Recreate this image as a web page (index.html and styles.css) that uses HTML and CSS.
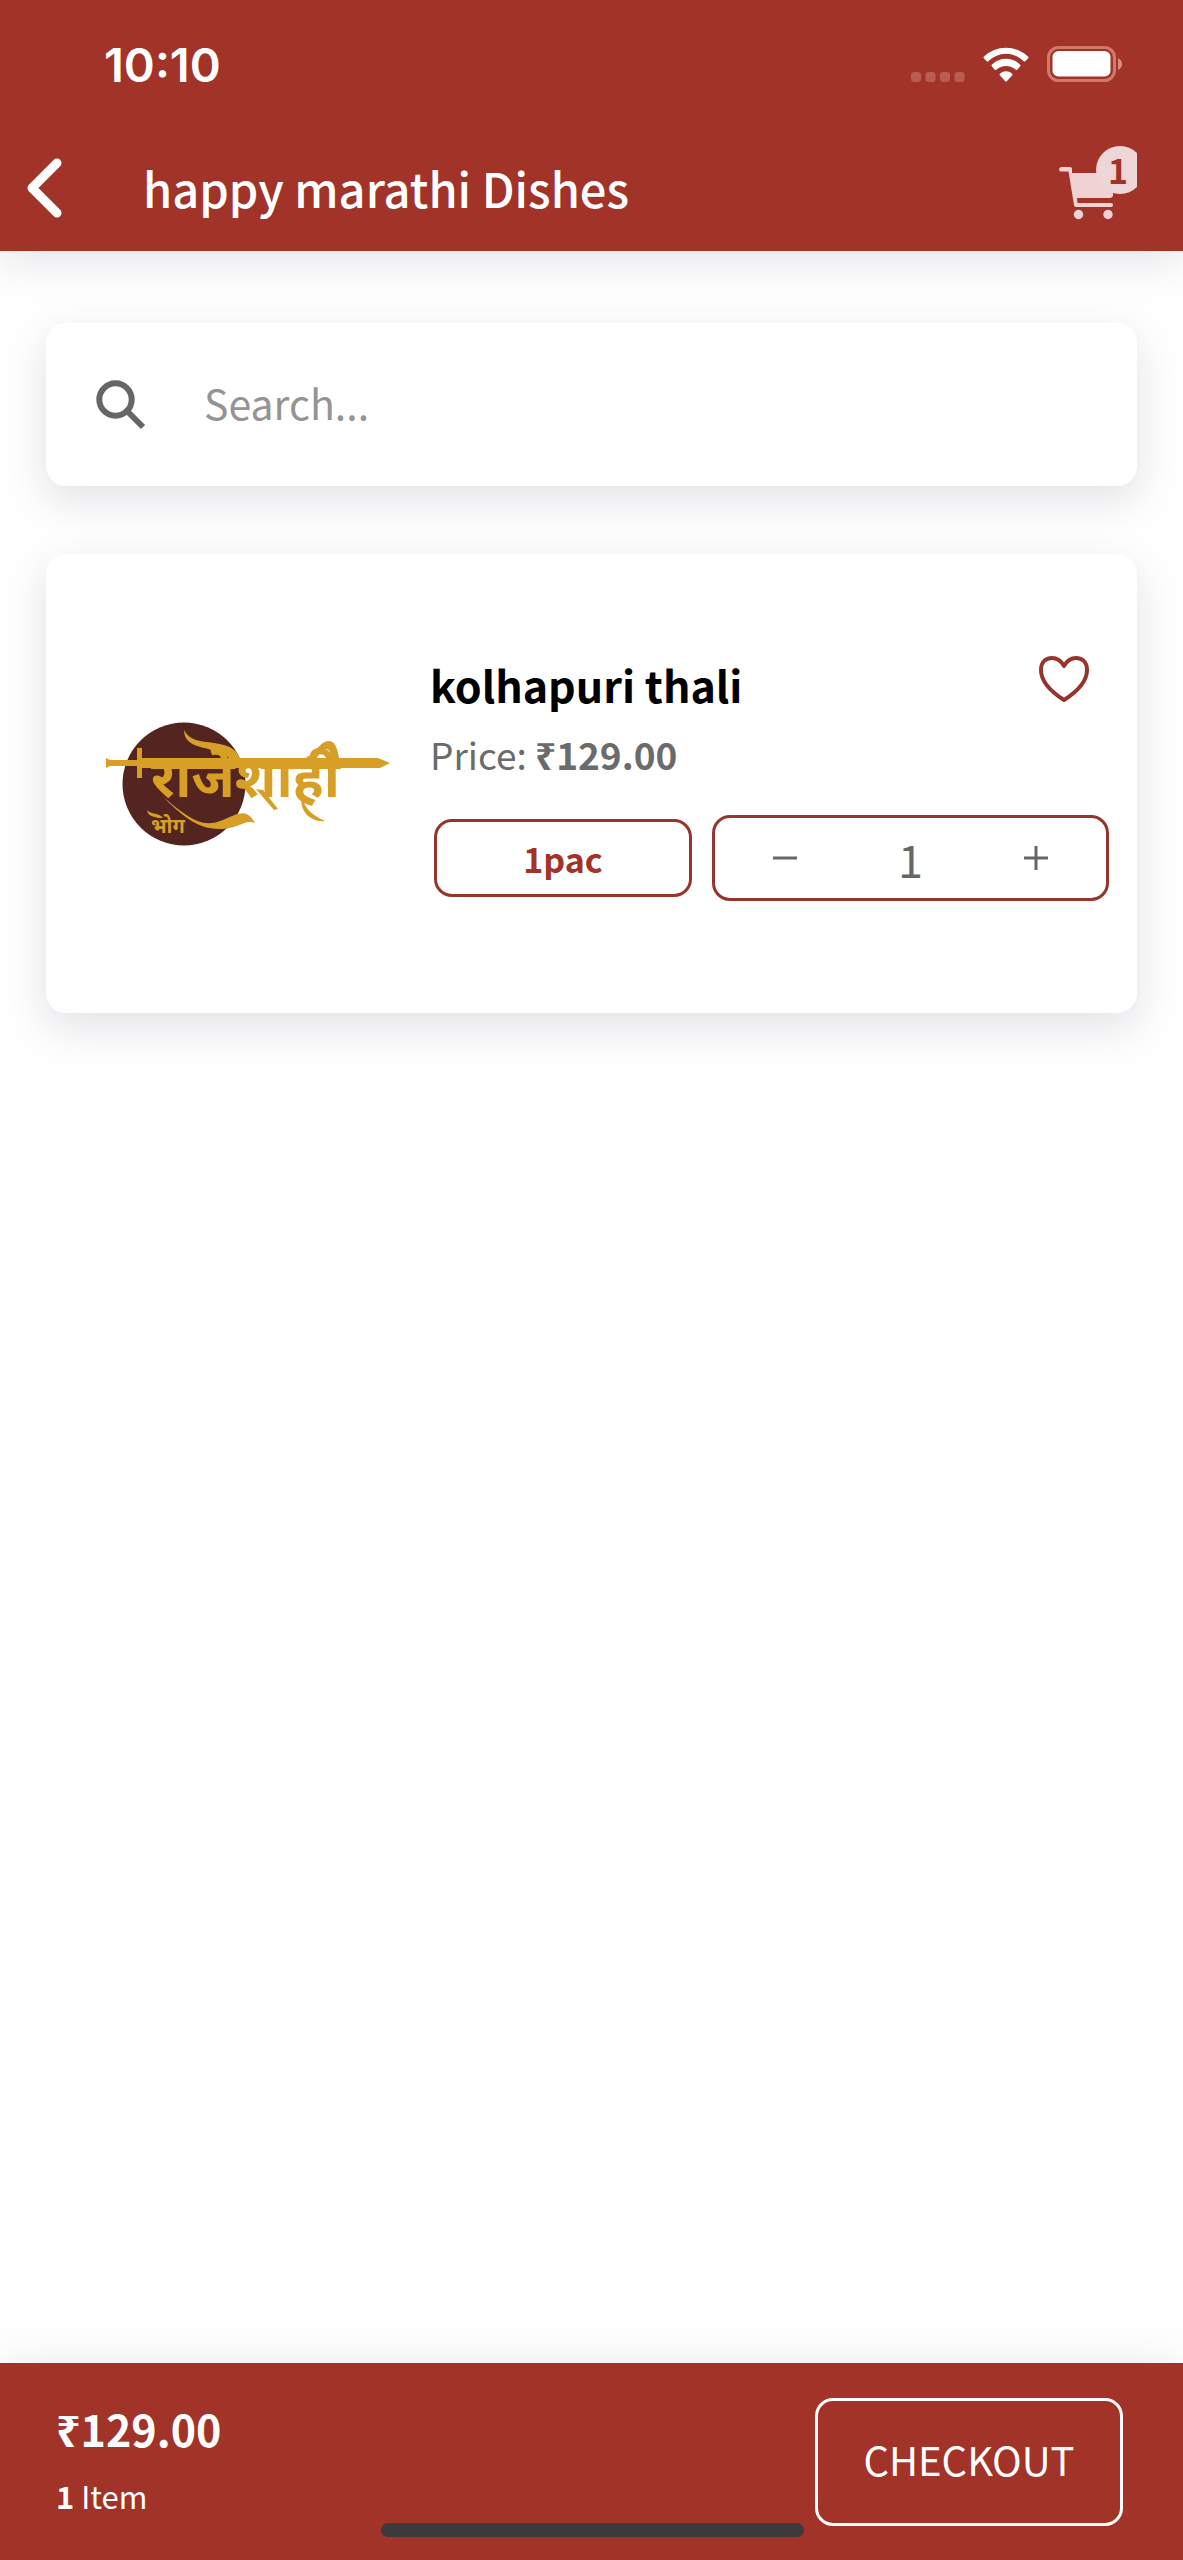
FILE: index.html
```html
<!DOCTYPE html>
<html lang="en">
<head>
    <meta charset="UTF-8">
    <meta name="viewport" content="width=device-width, initial-scale=1.0">
    <title>happy marathi Dishes</title>
    <link rel="stylesheet" href="styles.css">
</head>
<body>

    <header class="header">
        <div class="status-bar">
            <span class="time">10:10</span>
            <div class="status-icons">
                <svg class="signal" viewBox="0 0 54 10" aria-hidden="true">
                    <rect x="0" y="0" width="10" height="10" rx="3"/>
                    <rect x="14.500" y="0" width="10" height="10" rx="3"/>
                    <rect x="29" y="0" width="10" height="10" rx="3"/>
                    <rect x="43.500" y="0" width="10" height="10" rx="3"/>
                </svg>
                <svg class="wifi" viewBox="0 0 46 35" aria-hidden="true">
                    <path d="M1 9.500Q0 10.500 1 11.500L3.500 14Q4.500 15 5.500 14A25 25 0 0 1 40.500 14Q41.500 15 42.500 14L45 11.500Q46 10.500 45 9.500A32 32 0 0 0 1 9.500Z"/>
                    <path d="M9 17.500Q8 18.500 9 19.500L11.500 22.500Q12.500 23.500 13.500 22.500A14.500 14.500 0 0 1 32.500 22.500Q33.500 23.500 34.500 22.500L37 19.500Q38 18.500 37 17.500A20 20 0 0 0 9 17.500Z"/>
                    <path d="M17 26.500Q16 27.500 17 28.500L22 34Q23 35 24 34L29 28.500Q30 27.500 29 26.500A9.500 9.500 0 0 0 17 26.500Z"/>
                </svg>
                <svg class="battery" viewBox="0 0 76 36" aria-hidden="true">
                    <rect class="battery-case" x="1.500" y="1.500" width="66" height="33" rx="10"/>
                    <rect x="5.500" y="5" width="58" height="25.500" rx="6"/>
                    <path class="battery-tip" d="M71 12Q75 14 75 18T71 24Z"/>
                </svg>
            </div>
        </div>
        <div class="nav-bar">
            <button class="back" aria-label="Back">
                <svg viewBox="0 0 36 60"><path d="M30 5L5 30L30 55"/></svg>
            </button>
            <h1>happy marathi Dishes</h1>
            <button class="cart" aria-label="Cart">
                <svg viewBox="0 0 54 53">
                    <path d="M2 0H11Q13 0 13 2V6H54V29Q53 31 51 31H18L18.500 36H52Q54 36 54 38T52 40H17Q15 40 15 38L9.500 4.500H2Q0 4.500 0 2.500T2 0Z"/>
                    <circle cx="19.500" cy="47.500" r="4.700"/>
                    <circle cx="49" cy="47.500" r="4.700"/>
                </svg>
                <span class="badge">1</span>
            </button>
        </div>
    </header>

    <main>
        <label class="search">
            <svg viewBox="0 0 50 50" aria-hidden="true">
                <circle cx="19.500" cy="19.500" r="16.200"/>
                <path d="M30.500 30.500L47 47"/>
            </svg>
            <input type="text" placeholder="Search..." aria-label="Search">
        </label>

        <article class="card">
            <svg class="logo" viewBox="0 0 286 126" role="img" aria-label="Logo">
                <circle cx="78" cy="63" r="61.500" fill="#542420"/>
                <g fill="#d89f27">
                    <!-- sword -->
                    <path d="M0 37L4 39H31V27H36V37H272L284 42L274 47H36V57H31V45H4L0 47Z"/>
                    <!-- swashes around the name -->
                    <path d="M78 9C84 20 94 20 108 22C124 24 133 29 135 42H126C122 32 110 30 98 27C86 24 78 20 78 9Z"/>
                    <path d="M56 75C78 93 94 108 114 100C130 94 140 85 149 102C139 98 134 107 116 108C90 109 74 92 56 75Z"/>
                    <path d="M150 68L157 69L172 88L168 89Z"/>
                    <path d="M197 70C195 86 206 94 219 100C206 102 190 90 197 70Z"/>
                    <path d="M200 36C210 34 213 20 223 20C230 20 232 30 234 42H226C226 34 224 28 220 28C215 28 211 38 204 40Z"/>
                    <path d="M41 89C45 94 53 91 57 97H52C48 95 42 96 41 89Z"/>
                </g>
                <text class="logo-name" x="45" y="76">राजेशाही</text>
                <text class="logo-sub" x="45" y="112">भोग</text>
            </svg>
            <div class="details">
                <div class="title-row">
                    <h2>kolhapuri thali</h2>
                    <button class="favourite" aria-label="Add to favourites">
                        <svg viewBox="0 0 50 46"><path d="M25 10C21 3 17 2 13 2C6 2 2 7 2 14C2 26 14 37 25 44C36 37 48 26 48 14C48 7 44 2 37 2C33 2 29 3 25 10Z"/></svg>
                    </button>
                </div>
                <p class="price">Price: <b>₹129.00</b></p>
                <div class="options">
                    <button class="pack">1pac</button>
                    <div class="stepper">
                        <button aria-label="Decrease">
                            <svg viewBox="0 0 26 26"><path d="M1 13H25"/></svg>
                        </button>
                        <span>1</span>
                        <button aria-label="Increase">
                            <svg viewBox="0 0 26 26"><path d="M1 13H25M13 1V25"/></svg>
                        </button>
                    </div>
                </div>
            </div>
        </article>
    </main>

    <footer class="footer">
        <div class="summary">
            <b class="total">₹129.00</b>
            <span class="items"><b>1</b> Item</span>
        </div>
        <button class="checkout">CHECKOUT</button>
        <div class="home-indicator"></div>
    </footer>

</body>
</html>
```
FILE: styles.css
```css
* {
    box-sizing: border-box;
}

body {
    display: flex;
    flex-direction: column;
    min-height: 100vh;
    margin: 0;
    font-family: "Noto Sans CJK SC", "Noto Sans", sans-serif;
    background-color: #fefefe;
}

h1, h2, p {
    margin: 0;
}

button {
    padding: 0;
    border: none;
    background: none;
    font-family: inherit;
    cursor: pointer;
}

svg {
    display: block;
}

/* Header */
.header {
    background-color: #a13329;
    color: #fff;
    box-shadow: 0 8px 40px rgba(40, 20, 50, 0.12);
}

.status-bar {
    display: flex;
    justify-content: space-between;
    align-items: center;
    height: 128px;
    padding: 0 60px 0 104px;
}

.time {
    font-family: Inter, sans-serif;
    font-size: 47px;
    font-weight: 600;
}

.status-icons {
    display: flex;
    align-items: flex-end;
    gap: 18px;
    fill: #fff;
}

.signal {
    width: 54px;
    height: 10px;
    fill: #b95c51;
}

.wifi {
    width: 46px;
    height: 35px;
}

.battery {
    width: 76px;
    height: 36px;
}

.battery-case {
    fill: none;
    stroke: #cf7a6d;
    stroke-width: 3;
}

.battery-tip {
    fill: #d98d80;
}

.nav-bar {
    display: flex;
    align-items: center;
    height: 123px;
    padding: 0 46px 4px 27px;
}

.nav-bar h1 {
    flex: 1;
    margin-left: 80px;
    font-size: 47px;
    font-weight: 500;
    line-height: 60px;
}

.back svg {
    width: 36px;
    height: 60px;
    fill: none;
    stroke: #fff;
    stroke-width: 9;
    stroke-linecap: round;
    stroke-linejoin: round;
}

/* the badge circle is cut by the button's right edge */
.cart {
    position: relative;
    width: 78px;
    height: 88px;
    overflow: hidden;
}

.cart svg {
    width: 54px;
    height: 53px;
    margin-top: 12px;
    fill: #f0d2d2;
}

.badge {
    position: absolute;
    top: 0;
    left: 37px;
    width: 48px;
    height: 48px;
    margin-top: 2px;
    border-radius: 50%;
    background-color: #eed5d7;
    color: #a13329;
    font-size: 34px;
    font-weight: 700;
    line-height: 48px;
    padding-right: 4px;
}

/* Content */
main {
    display: flex;
    flex: 1;
    flex-direction: column;
    gap: 68px;
    padding: 72px 46px;
}

.search, .card {
    display: flex;
    align-items: center;
    border-radius: 20px;
    background-color: #fff;
    box-shadow: 0 14px 40px rgba(40, 20, 50, 0.12);
}

.search {
    height: 163px;
    padding: 0 50px;
}

.search svg {
    width: 50px;
    height: 50px;
    fill: none;
    stroke: #666;
    stroke-width: 6;
}

.search input {
    flex: 1;
    margin-left: 58px;
    padding: 0 0 5px;
    border: none;
    outline: none;
    background: none;
    font-family: inherit;
    font-size: 41px;
}

.search input::placeholder {
    color: #969395;
}

.card {
    gap: 38px;
    padding: 94px 28px 94px 60px;
}

.logo {
    flex: none;
    width: 286px;
    height: 126px;
}

.logo-name {
    fill: #d89f27;
    font-size: 55px;
    font-weight: 700;
}

.logo-sub {
    fill: #d89f27;
    font-size: 20px;
    font-weight: 700;
}

.details {
    flex: 1;
    padding-bottom: 18px;
}

.title-row {
    display: flex;
    justify-content: space-between;
    align-items: flex-start;
    padding-right: 20px;
}

.title-row h2 {
    font-size: 43px;
    font-weight: 700;
    line-height: 72px;
}

.favourite {
    padding-top: 8px;
}

.favourite svg {
    width: 50px;
    height: 46px;
    fill: none;
    stroke: #96352c;
    stroke-width: 4;
    stroke-linejoin: round;
}

.price {
    color: #6b6b6b;
    font-size: 37px;
    line-height: 68px;
}

.options {
    display: grid;
    grid-template-columns: 13fr 20fr;
    align-items: center;
    gap: 20px;
    margin-top: 27px;
    padding-left: 4px;
}

.pack {
    height: 78px;
    border: 3px solid #96352c;
    border-radius: 18px;
    color: #a13329;
    font-size: 34px;
    font-weight: 700;
}

.stepper {
    display: flex;
    justify-content: space-between;
    align-items: center;
    height: 86px;
    padding: 0 57px;
    border: 3px solid #96352c;
    border-radius: 18px;
    color: #666;
    font-size: 45px;
}

.stepper svg {
    width: 26px;
    height: 26px;
    stroke: #666;
    stroke-width: 3;
}

/* Footer */
.footer {
    position: relative;
    display: flex;
    justify-content: space-between;
    align-items: center;
    height: 197px;
    padding: 0 60px 0 56px;
    background-color: #a13329;
    color: #fff;
    box-shadow: 0 0 40px rgba(40, 20, 50, 0.08);
}

.summary {
    display: flex;
    flex-direction: column;
}

.total {
    font-size: 43px;
    line-height: 68px;
}

.items {
    font-size: 31px;
    line-height: 68px;
}

.checkout {
    width: 308px;
    height: 128px;
    padding-bottom: 5px;
    border: 3px solid #fff;
    border-radius: 18px;
    color: #fff;
    font-size: 40px;
}

.home-indicator {
    position: absolute;
    bottom: 23px;
    left: 50%;
    width: 423px;
    height: 14px;
    margin-left: -211px;
    border-radius: 7px;
    background-color: #3d3a3b;
}
```
